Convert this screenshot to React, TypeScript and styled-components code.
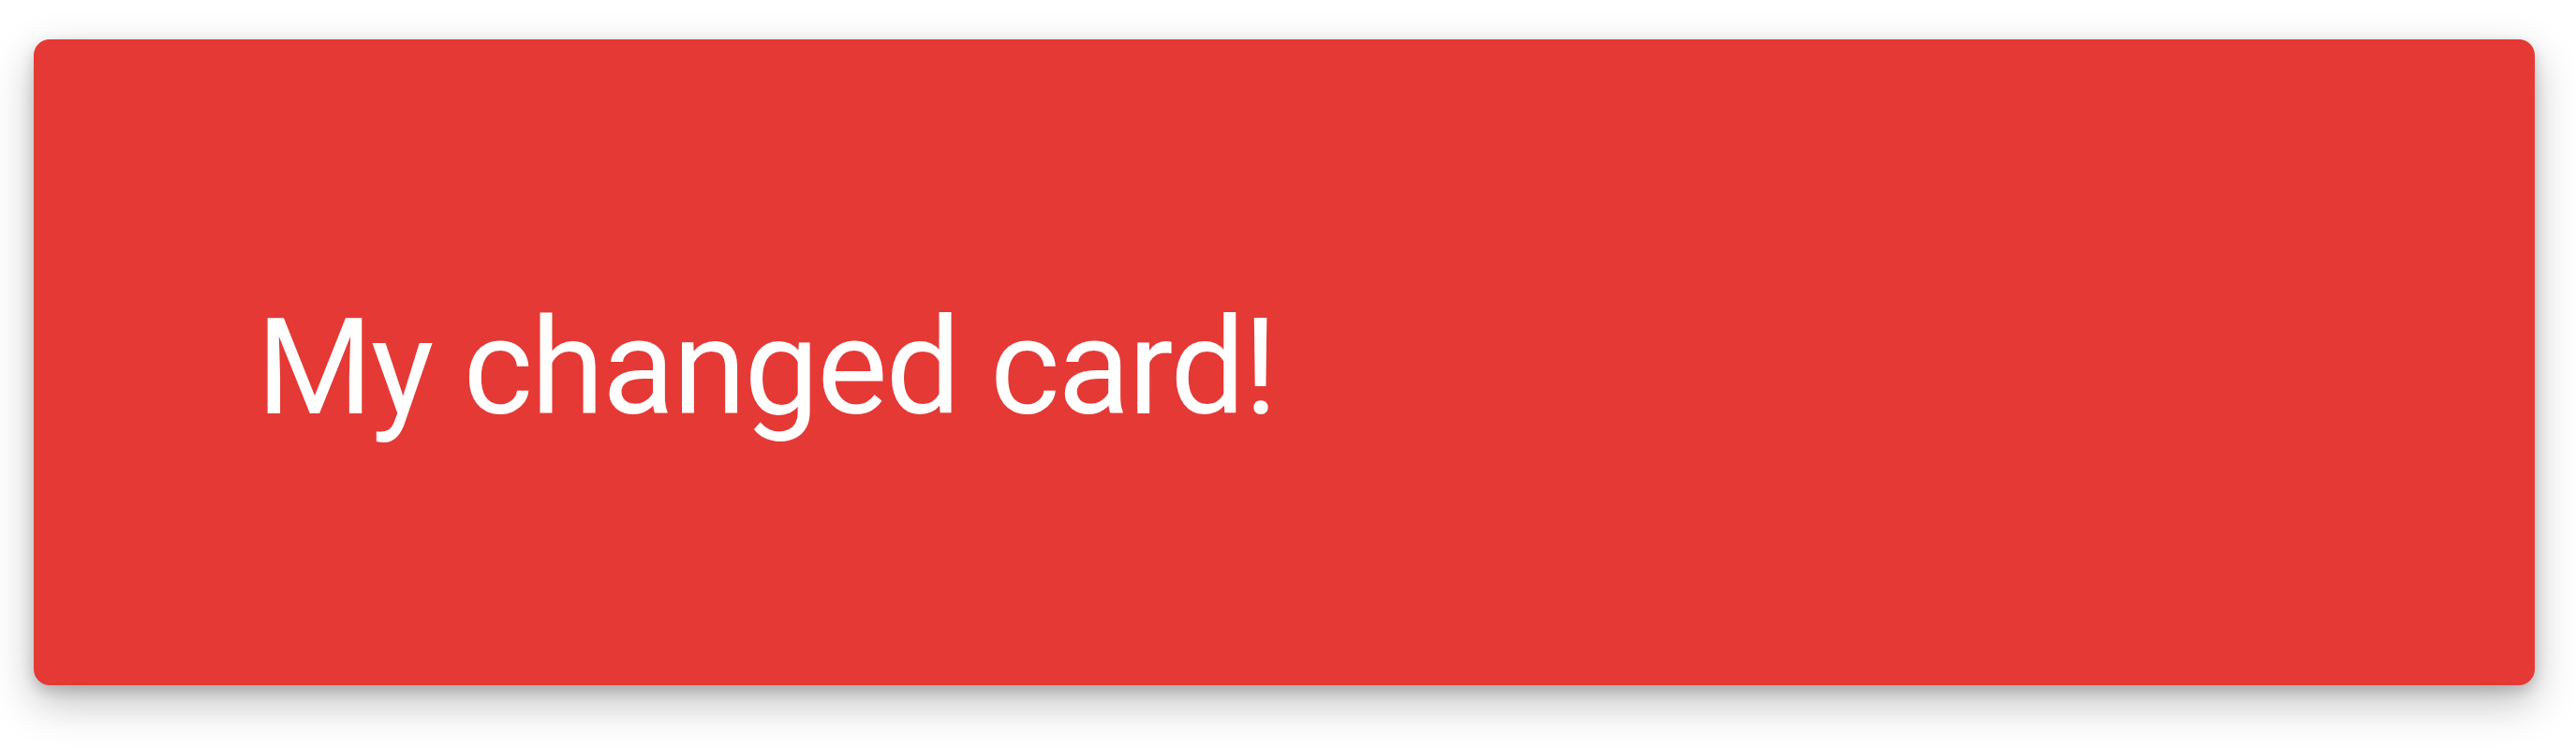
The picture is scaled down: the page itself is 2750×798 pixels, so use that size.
import { createGlobalStyle } from 'styled-components';
import styled from 'styled-components';

const GlobalStyle = createGlobalStyle`
	html, body {
		margin: 0;
		padding: 0;
		background: #ffffff;
	}
`;

const Page = styled.div`
	width: 2750px;
	height: 798px;
	box-sizing: border-box;
	padding: 42px 44px 0 36px;
`;

const Card = styled.div`
	height: 689px;
	display: flex;
	align-items: center;
	padding-left: 238px;
	box-sizing: border-box;
	background: #e53935;
	border-radius: 17px;
	box-shadow: 0 18px 45px rgba(0, 0, 0, 0.26), 0 6px 14px rgba(0, 0, 0, 0.16);
`;

const Title = styled.h1`
	margin: 0 0 -11px 0;
	font-family: Roboto, 'Liberation Sans', Arial, sans-serif;
	font-weight: 400;
	font-size: 142px;
	letter-spacing: -2px;
	color: #ffffff;
`;

const App = () => {
	return (
		<>
			<GlobalStyle />
			<Page>
				<Card>
					<Title>My changed card!</Title>
				</Card>
			</Page>
		</>
	);
};

export default App;
